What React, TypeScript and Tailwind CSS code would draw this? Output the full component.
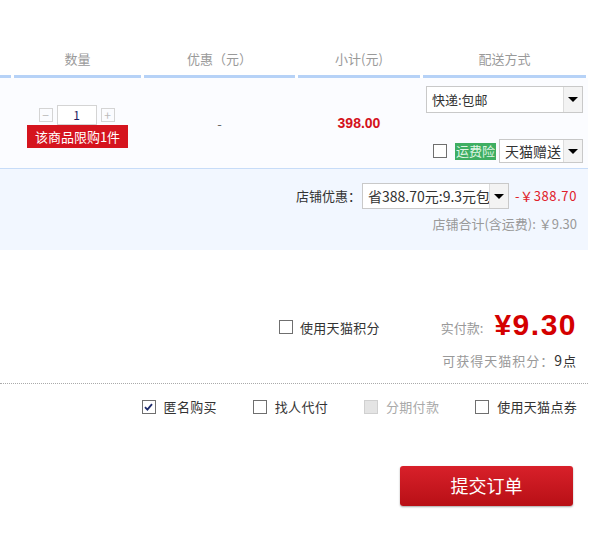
const cols = [
  { w: "w-[11px]", label: "" },
  { w: "w-[127px]", label: "数量" },
  { w: "w-[151px]", label: "优惠（元）" },
  { w: "w-[122px]", label: "小计(元)" },
  { w: "w-[163px]", label: "配送方式" },
]

function Select({ value, className }: { value: string; className: string }) {
  return (
    <div className={`flex items-stretch border border-[#c9c9c9] bg-white ${className}`}>
      <span className="flex-1 overflow-hidden whitespace-nowrap pl-[5px] leading-none flex items-center text-[#333]">
        {value}
      </span>
      <span className="flex w-[19px] items-center justify-center border-l border-[#dcdcdc] bg-[#f3f3f3]">
        <span className="h-0 w-0 border-x-[5px] border-t-[5px] border-x-transparent border-t-black" />
      </span>
    </div>
  )
}

function Box({ checked, disabled }: { checked?: boolean; disabled?: boolean }) {
  return (
    <span
      className={`inline-flex h-[14px] w-[14px] shrink-0 items-center justify-center border ${
        disabled ? "border-[#d0d0d0] bg-[#e4e4e4]" : "border-[#6f6f6f] bg-white"
      }`}
    >
      {checked && (
        <svg width="9" height="8" viewBox="0 0 9 8">
          <path d="M1 4.2 L3.4 6.6 L8 1.2" fill="none" stroke="#1d2a6b" strokeWidth="1.8" />
        </svg>
      )}
    </span>
  )
}

export default function App() {
  return (
    <div
      className="w-[600px] h-[535px] bg-white text-[13px] text-[#333]"
      style={{ fontFamily: '"Noto Sans CJK SC", "Liberation Sans", sans-serif' }}
    >
      {/* header */}
      <div className="flex gap-[3px] pt-[47px]">
        {cols.map((c, i) => (
          <div key={i} className={`${c.w} flex flex-col`}>
            <div className="h-[24px] flex items-center justify-center text-[13px] text-[#9a9a9a]">
              {c.label}
            </div>
            <div className="mt-[4px] h-[3px] bg-[#b6d2f7]" />
          </div>
        ))}
      </div>

      {/* item row */}
      <div className="flex h-[91px] w-[588px] gap-[3px] border-b border-[#c7dcf8] bg-[#fbfcff]">
        <div className="w-[11px]" />
        <div className="w-[127px] flex flex-col items-center pt-[27px]">
          <div className="flex items-center gap-[4px] pr-[2px]">
            <span className="flex h-[14px] w-[14px] items-center justify-center border border-[#d4d4d4] text-[12px] leading-none text-[#bbb]">
              −
            </span>
            <span className="flex h-[20px] w-[40px] items-center justify-center border border-[#d4d4d4] bg-white text-[12px] text-[#1a1a5e]">
              1
            </span>
            <span className="flex h-[14px] w-[14px] items-center justify-center border border-[#d4d4d4] text-[12px] leading-none text-[#bbb]">
              +
            </span>
          </div>
          <div className="flex h-[23px] w-[101px] items-center justify-center bg-[#d5141e] text-[13px] text-white">
            该商品限购1件
          </div>
        </div>
        <div className="w-[151px] flex items-center justify-center pt-[2px] text-[#666]">-</div>
        <div className="w-[122px] flex items-center justify-center text-[14px] font-bold text-[#d4121b]" style={{ fontFamily: '"Liberation Sans", sans-serif' }}>
          398.00
        </div>
        <div className="w-[163px] flex flex-col items-end pr-[3px] pt-[8px]">
          <Select value="快递:包邮" className="h-[27px] w-[157px]" />
          <div className="mt-[26px] flex items-center">
            <Box />
            <span className="ml-[8px] flex h-[17px] items-center bg-[#3fae62] px-[1px] text-[13px] text-[#dff5e4]">
              运费险
            </span>
            <Select value="天猫赠送" className="ml-[3px] h-[24px] w-[84px] text-[14px]" />
          </div>
        </div>
      </div>

      {/* store row */}
      <div className="flex h-[81px] w-[588px] flex-col items-end bg-[#f2f7ff] pr-[11px] pt-[14px]">
        <div className="flex items-center">
          <span className="text-[#333]">店铺优惠：</span>
          <Select value="省388.70元:9.3元包邮" className="ml-[1px] h-[26px] w-[147px] text-[14px]" />
          <span className="ml-[6px] text-[13px] tracking-[0.6px] text-[#e0202a]">-￥388.70</span>
        </div>
        <div className="mt-[5px] text-[13px] text-[#999]">店铺合计(含运费): ￥9.30</div>
      </div>

      {/* total */}
      <div className="flex w-[588px] flex-col items-end pr-[11px] pt-[60px]">
        <div className="flex items-end">
          <label className="mb-[3px] mr-[61px] flex items-center gap-[7px] text-[13px] tracking-[0.3px]">
            <Box />
            使用天猫积分
          </label>
          <span className="mb-[3px] text-[13px] text-[#999]">实付款:</span>
          <span
            className="ml-[11px] text-[30px] font-bold leading-none tracking-[1.5px] text-[#d40000]"
            style={{ fontFamily: '"Liberation Sans", sans-serif' }}
          >
            ¥9.30
          </span>
        </div>
        <div className="mt-[10px] text-[13px] tracking-[1px] text-[#999]">
          可获得天猫积分：<span className="text-[14px] text-[#333]">9</span>
          <span className="text-[#333]">点</span>
        </div>
      </div>

      <div className="mt-[12px] w-[588px] border-t border-dotted border-[#aaa]" />

      <div className="flex w-[588px] justify-end gap-[36px] pr-[11px] pt-[13px] text-[13px] tracking-[0.3px]">
        <label className="flex items-center gap-[8px]">
          <Box checked />
          匿名购买
        </label>
        <label className="flex items-center gap-[8px]">
          <Box />
          找人代付
        </label>
        <label className="flex items-center gap-[8px] text-[#aaa]">
          <Box disabled />
          分期付款
        </label>
        <label className="flex items-center gap-[8px]">
          <Box />
          使用天猫点券
        </label>
      </div>

      <div className="flex w-[588px] justify-end pr-[15px] pt-[49px]">
        <button className="h-[40px] w-[173px] rounded-[3px] bg-gradient-to-b from-[#d8202a] to-[#b80f15] text-[18px] text-white shadow-[0_1px_2px_rgba(0,0,0,0.35)]">
          提交订单
        </button>
      </div>
    </div>
  )
}
